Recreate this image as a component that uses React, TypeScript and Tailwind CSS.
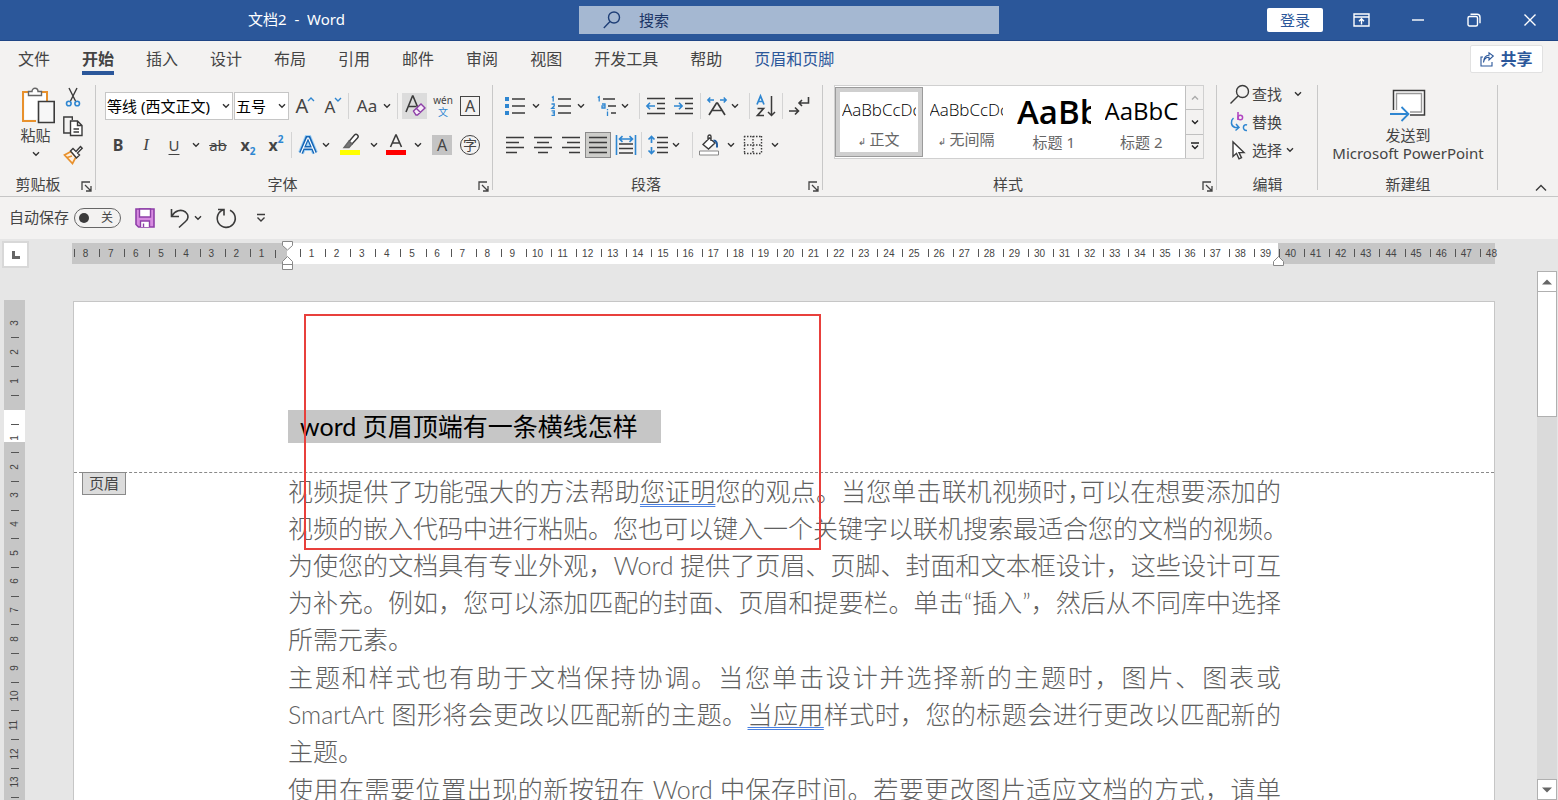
import type { ReactNode } from 'react';
import clsx from 'clsx';

const TABS = ['文件', '开始', '插入', '设计', '布局', '引用', '邮件', '审阅', '视图', '开发工具', '帮助'];

const LEFT_MARKS = [8, 7, 6, 5, 4, 3, 2, 1];
const BODY_MARKS = Array.from({ length: 39 }, (_, i) => i + 1);
const RIGHT_MARKS = Array.from({ length: 9 }, (_, i) => i + 40);
const SIDE_MARKS = Array.from({ length: 13 }, (_, i) => i + 1);

const STYLES = [
  { name: '正文', mark: true, sample: 'AaBbCcDc', look: 'text-[17px] font-light' },
  { name: '无间隔', mark: true, sample: 'AaBbCcDc', look: 'text-[17px] font-light' },
  { name: '标题 1', mark: false, sample: 'AaBb', look: 'text-[33px] font-semibold' },
  { name: '标题 2', mark: false, sample: 'AaBbC', look: 'text-2xl' },
];

function Chevron({ className = 'w-4' }: { className?: string }) {
  return (
    <button aria-label="更多选项" className={clsx('flex h-6 shrink-0 items-center justify-center', className)}>
      <svg width="8" height="6" viewBox="0 0 8 6" fill="none" stroke="#333" strokeWidth="1.4"><path d="M1 1.2 4 4.2 7 1.2" /></svg>
    </button>
  );
}

function Tool({ label, className = 'w-5', children }: { label: string; className?: string; children: ReactNode }) {
  return (
    <button aria-label={label} className={clsx('flex h-[26px] shrink-0 items-center justify-center', className)}>
      {children}
    </button>
  );
}

function Sep({ className }: { className?: string }) {
  return <span className={clsx('h-[26px] w-px shrink-0 bg-[#d4d4d4]', className)} />;
}

function Icon({ children, w = 20, h = 20 }: { children: ReactNode; w?: number; h?: number }) {
  return (
    <svg width={w} height={h} viewBox={`0 0 ${w} ${h}`} fill="none" stroke="#3b3b3b" strokeWidth="1.4" className="shrink-0 overflow-visible">
      {children}
    </svg>
  );
}

function Launcher() {
  return (
    <button aria-label="对话框启动器" className="absolute right-0.5 bottom-0.5 flex size-4 items-center justify-center">
      <svg width="11" height="11" viewBox="0 0 11 11" fill="none" stroke="#444" strokeWidth="1.3"><path d="M1 9V1h8M4 4l5.5 5.5M10 5v5H5" /></svg>
    </button>
  );
}

function Group({ title, className, launcher, children }: { title: string; className?: string; launcher?: boolean; children: ReactNode }) {
  return (
    <section className={clsx('relative flex h-[113px] flex-col justify-between', className)}>
      <span className="absolute top-0.5 right-0 h-[105px] w-px bg-[#c8c8c8]" />
      <div>{children}</div>
      <h2 className="text-center leading-6">{title}</h2>
      {launcher && <Launcher />}
    </section>
  );
}

function TitleBar() {
  return (
    <header className="grid h-[41px] shrink-0 grid-cols-[579fr_420fr_559fr] items-center border-b border-[#1f4585] bg-[#2b579a] text-white">
      <h1 className="pb-0.5 pl-[14px] text-center whitespace-pre">文档2  -  Word</h1>
      <label className="flex h-7 items-center bg-[#a5b8d2] pl-6">
        <Icon w={18} h={18}><circle cx="11" cy="6.5" r="5.5" stroke="#1f3f77" /><path stroke="#1f3f77" d="M7 10.5 .8 17" /></Icon>
        <input type="search" aria-label="搜索" placeholder="搜索" className="ml-[18px] min-w-0 flex-1 bg-transparent outline-none placeholder:text-[#1b3566] placeholder:opacity-100" />
      </label>
      <div className="flex items-center justify-end pr-[21px]">
        <button className="h-6 w-14 rounded-xs bg-white text-[#2b579a]">登录</button>
        <button aria-label="功能区显示选项" className="ml-[30px]">
          <Icon w={18} h={14}><g stroke="#fff"><path d="M1 1h15v12H1zM1 4h15M8.5 11.5V6M6 8.3 8.5 5.8 11 8.3" /></g></Icon>
        </button>
        <button aria-label="最小化" className="ml-10">
          <Icon w={14} h={14}><path stroke="#fff" d="M1 7h12" /></Icon>
        </button>
        <button aria-label="还原" className="ml-[42px]">
          <Icon w={14} h={14}><g stroke="#fff"><rect x="1" y="3.5" width="9.5" height="9.5" rx="1.5" /><path d="M3.5 1.2H10a3 3 0 0 1 3 3v6" /></g></Icon>
        </button>
        <button aria-label="关闭" className="ml-[42px]">
          <Icon w={14} h={14}><path stroke="#fff" d="M1.5 1.5l11 11M12.5 1.5l-11 11" /></Icon>
        </button>
      </div>
    </header>
  );
}

function TabBar() {
  return (
    <nav className="flex h-[42px] shrink-0 items-start pr-[15px] pl-[18px] text-base">
      <div className="flex flex-1 gap-8">
        {TABS.map(tab => (
          <button key={tab} className={clsx('relative h-[34px] pt-0.5', tab === '开始' && 'font-bold')}>
            {tab}
            {tab === '开始' && <span className="absolute inset-x-0 bottom-0 h-1 bg-[#2b579a]" />}
          </button>
        ))}
        <button className="pt-0.5 text-[#2b579a]">页眉和页脚</button>
      </div>
      <button className="mt-1 flex h-7 w-[73px] items-center justify-center gap-1.5 rounded-xs border border-[#e1e1e1] bg-white font-bold text-[#2b579a]">
        <Icon w={14} h={15}><g stroke="#2b579a" strokeWidth="1.1"><path d="M3 5H1v9h11v-4M3.5 10.5C4 7 6 5.300 9 5.300V8l4.300-4L9 .8v2.500C5.500 3.500 3.700 6.500 3.500 10.500Z" /></g></Icon>
        共享
      </button>
    </nav>
  );
}

function ClipboardGroup() {
  return (
    <Group title="剪贴板" launcher className="w-24 shrink-0 [&>h2]:pr-5">
      <div className="flex pl-[18px]">
        <button className="flex w-[35px] flex-col items-center pt-1 leading-5 whitespace-nowrap">
          <Icon w={34} h={37}>
            <path stroke="#e8912d" strokeWidth="2" d="M10 5H4v29h13M22 5h6v9" />
            <path fill="#fff" stroke="none" d="M5.500 6.500H27V14H19v18.500H5.500z" />
            <path stroke="#666" fill="#fff" d="M9.500 8.500v-4h3.500a3 3.300 0 0 1 6 0h3.500v4z" />
            <path fill="#f7f7f7" strokeWidth="1.6" d="M19.500 14.500h15.700v21H19.500z" />
          </Icon>
          <span className="mt-px">粘贴</span>
          <svg width="8" height="6" viewBox="0 0 8 6" fill="none" stroke="#333" strokeWidth="1.4" className="mt-1.5"><path d="M1 1.200 4 4.200 7 1.200" /></svg>
        </button>
        <div className="ml-2.5 flex flex-col items-center gap-[9px] pt-1">
          <button aria-label="剪切">
            <Icon>
              <path d="M6 1l6.500 13M14 1 7.500 14" />
              <g stroke="#2e86d1" strokeWidth="1.600"><circle cx="5.800" cy="16.500" r="2.300" /><circle cx="14.200" cy="16.500" r="2.300" /></g>
            </Icon>
          </button>
          <button aria-label="复制">
            <Icon><path d="M7 17H.8V1h8.500v3" /><path fill="#fff" d="M7.500 5h7l4.500 4.500V19.500H7.500zM14.500 5v4.500H19M10.500 13h5.500M10.500 16h5.500" /></Icon>
          </button>
          <button aria-label="格式刷">
            <Icon>
              <path stroke="#e8912d" fill="#fdf0e0" strokeWidth="1.700" d="M8 6.500 1.500 10l8 8.500L13 12z" />
              <path stroke="#e8912d" d="M4 12.500l5-1.500" />
              <path fill="#fff" d="M7.500 6l2.500-2.500 3 3L17.500 1.500l1.700 1.700L14.500 8l2 2-3 3z" />
            </Icon>
          </button>
        </div>
      </div>
    </Group>
  );
}

function FontGroup() {
  return (
    <Group title="字体" launcher className="w-[397px] shrink-0 [&>h2]:pr-6">
      <div className="flex h-[46px] items-center pl-[9px]">
        <div className="relative w-32">
          <select aria-label="字体" className="h-7 w-full appearance-none border border-[#c6c6c6] bg-white pl-px text-black">
            <option>等线 (西文正文)</option>
          </select>
          <span className="pointer-events-none absolute top-0.5 right-0"><Chevron className="w-3.5" /></span>
        </div>
        <div className="relative ml-px w-[55px]">
          <select aria-label="字号" className="h-7 w-full appearance-none border border-[#c6c6c6] bg-white pl-px text-black">
            <option>五号</option>
          </select>
          <span className="pointer-events-none absolute top-0.5 right-0"><Chevron className="w-3.5" /></span>
        </div>
        <Tool label="增大字号" className="w-8"><span className="text-xl leading-none">A</span><Icon w={6} h={20}><path stroke="#2e86d1" d="M0 5l3-3 3 3" /></Icon></Tool>
        <Tool label="减小字号" className="w-6"><span className="text-[17px] leading-none">A</span><Icon w={6} h={20}><path stroke="#2e86d1" d="M0 2l3 3 3-3" /></Icon></Tool>
        <Sep className="ml-[3px]" />
        <Tool label="更改大小写" className="w-8 pl-1"><span className="text-[17px]">Aa</span></Tool>
        <Chevron className="w-3" />
        <Sep className="ml-1" />
        <Tool label="清除所有格式" className="ml-1 w-[25px] bg-[#dcdcdc]">
          <Icon w={22} h={24}>
            <path strokeWidth="1.600" d="M2 18 8.500 2h.5l5 12M4.200 12.500h8" />
            <path stroke="#8e3fa8" fill="#f6eaf8" d="M9.500 17l7.500-7 4 4-7.500 7h-1.500zM12.500 14.500l4 4" />
          </Icon>
        </Tool>
        <Tool label="拼音指南" className="w-8 flex-col text-[10px] leading-3"><span>wén</span><span className="text-[#2e86d1]">文</span></Tool>
        <Tool label="字符边框" className="w-[22px]"><span className="flex size-5 items-center justify-center border-[1.5px] border-[#444] text-base leading-none">A</span></Tool>
      </div>
      <div className="flex h-8 items-center pl-2">
        <Tool label="加粗" className="w-7"><span className="text-base font-bold">B</span></Tool>
        <Tool label="倾斜" className="w-7"><span className="font-[Liberation_Serif] text-[17px] italic">I</span></Tool>
        <Tool label="下划线" className="w-7"><span className="underline underline-offset-3">U</span></Tool>
        <Chevron />
        <Tool label="删除线" className="w-7"><span className="line-through">ab</span></Tool>
        <Tool label="下标" className="w-8"><span className="text-base font-bold">x</span><span className="mt-3 text-[10px] font-bold text-[#2e86d1]">2</span></Tool>
        <Tool label="上标" className="w-6"><span className="text-base font-bold">x</span><span className="mb-3 text-[10px] font-bold text-[#2e86d1]">2</span></Tool>
        <Sep className="mr-1 ml-[3px]" />
        <Tool label="文本效果" className="w-6">
          <Icon><path stroke="#9fd0f5" strokeWidth="6" d="M3 18 9.200 3h1.600L17 18M5.500 13h9" /><path stroke="#1565b5" strokeWidth="4" d="M3 18 9.200 3h1.600L17 18M5.500 13h9" /><path stroke="#fff" strokeWidth="1.200" d="M3 18 9.500 3h1L17 18M5.500 13h9" /></Icon>
        </Tool>
        <Chevron className="w-3" />
        <Tool label="突出显示" className="w-9">
          <Icon w={20} h={22}><path fill="#ff0" stroke="none" d="M0 16h20v5H0z" /><path fill="#fff" d="M9 7.500 14.500 1a2 2 0 0 1 3 3L12 10z" /><path fill="#777" stroke="#666" d="M9 7 12 10l-3 3.500H4z" /></Icon>
        </Tool>
        <Chevron className="w-3" />
        <Tool label="字体颜色" className="w-8">
          <Icon w={20} h={22}><path fill="#f00" stroke="none" d="M0 16h20v5H0z" /><path strokeWidth="1.600" d="M4.500 13 9.800 1h.4L15.500 13M6.500 9h7" /></Icon>
        </Tool>
        <Chevron className="w-3" />
        <Tool label="字符底纹" className="w-9"><span className="flex size-5 items-center justify-center bg-[#c4c4c4] text-base leading-none">A</span></Tool>
        <Tool label="带圈字符"><span className="flex size-5 items-center justify-center rounded-full border border-[#444] text-sm leading-none">字</span></Tool>
      </div>
    </Group>
  );
}

function ParagraphGroup() {
  return (
    <Group title="段落" launcher className="w-[330px] shrink-0 [&>h2]:pr-6">
      <div className="flex h-[46px] items-center pl-3">
        <Tool label="项目符号">
          <Icon><path d="M7 3h13M7 10h13M7 17h13" /><path fill="#2e86d1" stroke="none" d="M0 1h4v4H0zM0 8h4v4H0zM0 15h4v4H0z" /></Icon>
        </Tool>
        <Chevron className="w-[22px]" />
        <Tool label="编号" className="ml-1 w-5">
          <Icon><path d="M7 3h13M7 10h13M7 17h13" /><path stroke="#2e86d1" strokeWidth="1.300" d="M.8 1.500 2.200.6V5.500M.5 8h2.700v2L.8 12.300h3M.5 14.800h2.800v2H1.500h1.800v2.500H.5" /></Icon>
        </Tool>
        <Chevron className="w-5" />
        <Tool label="多级列表" className="ml-1.5 w-5">
          <Icon><path d="M6 3h12M11 10h8M14 17h5" /><path stroke="#2e86d1" strokeWidth="1.300" d="M.8 1.500 2.200.6V5.500M5 8h3v4H5V9.800h3M10.500 15.500v4.500M10.500 13v1.300" /></Icon>
        </Tool>
        <Chevron />
        <Sep className="ml-1.5" />
        <Tool label="减少缩进量" className="ml-1.5 w-5">
          <Icon><path d="M1 2.500h18M11 7.500h8M11 12.500h8M1 17.500h18" /><path stroke="#2e86d1" strokeWidth="1.600" d="M9 10H1M4 6.800.9 10 4 13.200" /></Icon>
        </Tool>
        <Tool label="增加缩进量" className="ml-2 w-5">
          <Icon><path d="M1 2.500h18M11 7.500h8M11 12.500h8M1 17.500h18" /><path stroke="#2e86d1" strokeWidth="1.600" d="M0 10h8M5 6.800 8.100 10 5 13.200" /></Icon>
        </Tool>
        <Sep className="ml-1.5" />
        <Tool label="中文版式" className="ml-1.5 w-5">
          <Icon><path strokeWidth="1.700" d="M2 19 9.500 7h1L18 19M5.500 14.500h9" /><path stroke="#2e86d1" d="M7 4H.8M3.300 1.500.8 4l2.500 2.500M13 4h6.200M16.700 1.500 19.200 4l-2.500 2.500" /></Icon>
        </Tool>
        <Chevron />
        <Sep className="ml-1.5" />
        <Tool label="排序" className="ml-1.5 w-5">
          <Icon w={20} h={22}><path stroke="#2e86d1" strokeWidth="1.700" d="M1 9.500 4.500 1 8 9.500M2.300 6.500h4.500" /><path strokeWidth="1.700" d="M1.500 13.500h6L1.500 20.500h6.500" /><path strokeWidth="1.500" d="M15.500 1v19.500M12 17l3.500 3.500L19 17" /></Icon>
        </Tool>
        <Sep className="ml-1.5" />
        <Tool label="显示编辑标记" className="ml-1.5 w-5">
          <Icon><path strokeWidth="1.600" d="M19.500 1v6H10M13 4 10 7l3 3M0 15h9.500M6 11.500 9.500 15 6 18.500" /></Icon>
        </Tool>
      </div>
      <div className="flex h-8 items-center pl-3">
        <Tool label="左对齐"><Icon><path d="M1 2.500h18M1 7.500h13M1 12.500h18M1 17.500h11" /></Icon></Tool>
        <Tool label="居中" className="ml-2 w-5"><Icon><path d="M1 2.500h18M4 7.500h12M1 12.500h18M5 17.500h10" /></Icon></Tool>
        <Tool label="右对齐" className="ml-2 w-5"><Icon><path d="M1 2.500h18M6 7.500h13M1 12.500h18M8 17.500h11" /></Icon></Tool>
        <Tool label="两端对齐" className="ml-1 w-[26px] border border-[#8a8a8a] bg-[#cdcdca]"><Icon><path d="M1 2.500h18M1 7.500h18M1 12.500h18M1 17.500h18" /></Icon></Tool>
        <Tool label="分散对齐" className="ml-1 w-[22px]">
          <Icon><path d="M3 9h14M3 13.500h14M3 18h14" /><path stroke="#2e86d1" strokeWidth="1.600" d="M.5 0v20M19.500 0v20M3.500 4h13M6.500 1.200 3.500 4l3 2.800M13.500 1.200l3 2.800-3 2.800" /></Icon>
        </Tool>
        <Sep className="ml-1" />
        <Tool label="行距" className="ml-1.5 w-5">
          <Icon><path d="M9 2.500h11M9 7.500h11M9 12.500h11M9 17.500h11" /><path stroke="#2e86d1" strokeWidth="1.700" d="M3.500 8V1.500M.5 4.500l3-3 3 3M3.500 12v6.500M.5 15.500l3 3 3-3" /></Icon>
        </Tool>
        <Chevron />
        <Sep className="ml-2" />
        <Tool label="底纹" className="ml-1.5 w-5">
          <Icon><path fill="#fff" stroke="#888" strokeWidth="1" d="M.5 16h19v4H.5z" /><path fill="#fff" d="M4 9.500 10.500 3l5.500 5-6.500 6zM9 5V1.500a1.500 1.500 0 0 1 3 0V6" /><path stroke="#1f5a9e" strokeWidth="2" d="M14.500 5.500c3 0 4 2.500 3.500 7" /></Icon>
        </Tool>
        <Chevron className="w-6" />
        <Tool label="边框"><Icon><path strokeDasharray="1.500 1.500" d="M1 1.500h18M1 10h18M1 18.500h18M1.500 1v18M10 1v18M18.500 1v18" /></Icon></Tool>
        <Chevron className="w-6" />
      </div>
    </Group>
  );
}

function StylesGroup() {
  return (
    <Group title="样式" launcher className="min-w-0 flex-1 [&>h2]:pr-6">
      <div className="mt-0.5 mr-[13px] ml-[11px] flex h-[74px] border border-[#d0d0d0] bg-white">
        {STYLES.map((style, i) => (
          <button
            key={style.name}
            className={clsx('my-px flex min-w-0 flex-1 flex-col justify-between overflow-hidden border px-0.5 pt-0.5 pb-1',
              i === 0 ? 'border-[#9b9b9b] ring-4 ring-[#cfcfcf] ring-inset' : 'border-transparent')}
          >
            <span className="mx-1 flex h-[46px] items-center overflow-hidden">
              <span className={clsx('font-[Open_Sans] leading-none text-black', style.look)}>{style.sample}</span>
            </span>
            <span className="w-full text-center leading-5 text-[#666]">
              {style.mark && <span className="font-[DejaVu_Sans] text-[10px]">↲ </span>}{style.name}
            </span>
          </button>
        ))}
        <div className="flex w-[18px] shrink-0 flex-col divide-y divide-[#c0c0c0] border-l border-[#c0c0c0] bg-[#f3f2f1]">
          <button aria-label="上一行" className="flex flex-1 items-center justify-center"><Icon w={8} h={6}><path stroke="#aaa" d="M1 4.500l3-3 3 3" /></Icon></button>
          <button aria-label="下一行" className="flex flex-1 items-center justify-center"><Icon w={8} h={6}><path stroke="#222" d="M1 1.500l3 3 3-3" /></Icon></button>
          <button aria-label="其他" className="flex flex-1 items-center justify-center"><Icon w={8} h={8}><path stroke="#222" d="M0 1h8M1 3.500l3 3 3-3" /></Icon></button>
        </div>
      </div>
    </Group>
  );
}

function EditGroup() {
  return (
    <Group title="编辑" className="w-[101px] shrink-0">
      <div className="flex flex-col pl-[13px] leading-7">
        <div className="-mt-[3px] flex items-center">
          <button className="flex items-center gap-[3px]"><Icon w={19} h={19}><circle cx="12.500" cy="6.500" r="6" /><path d="M8 11 .5 18.500" /></Icon>查找</button>
          <Chevron className="ml-1.5 w-5" />
        </div>
        <button className="flex items-center gap-[3px]">
          <Icon w={19} h={20}>
            <path stroke="#b146c2" strokeWidth="1.600" d="M8 0v8" /><circle cx="10.300" cy="5.500" r="2.300" stroke="#b146c2" strokeWidth="1.500" />
            <path stroke="#2e86d1" strokeWidth="1.500" d="M3.500 6c-3 2.500-3 8 1.500 9.500h3.500M6 12l3 3.500-3.500 3M17 13c-4-2-5.500 6 0 5.500" />
          </Icon>
          替换
        </button>
        <div className="flex items-center">
          <button className="flex items-center gap-[3px]"><Icon w={19} h={19}><path fill="#fff" d="M3 1v14.500l3.500-3.200 2.500 5.500 2.500-1.200-2.500-5h5z" /></Icon>选择</button>
          <Chevron />
        </div>
      </div>
    </Group>
  );
}

function Ribbon() {
  return (
    <div className="flex shrink-0 border-b border-[#c6c6c6]">
      <ClipboardGroup />
      <FontGroup />
      <ParagraphGroup />
      <StylesGroup />
      <EditGroup />
      <Group title="新建组" className="w-[180px] shrink-0">
        <button className="flex w-full flex-col items-center pt-[7px] leading-[18px]">
          <Icon w={36} h={32}>
            <path fill="#fff" strokeWidth="1.500" d="M3.500 20V.500h31V25H20" />
            <path stroke="#999" d="M6.500 20V3.500h25V22H20" />
            <path stroke="#2e86d1" strokeWidth="1.800" d="M0 24h18M11.500 17 18.500 24l-7 7" />
          </Icon>
          <span className="mt-1">发送到</span>
          <span>Microsoft PowerPoint</span>
        </button>
      </Group>
      <div className="flex w-[60px] shrink-0 items-end justify-center pb-1 pl-[26px]">
        <button aria-label="折叠功能区"><Icon w={12} h={8}><path d="M1 6.500l5-5 5 5" /></Icon></button>
      </div>
    </div>
  );
}

function QuickAccess() {
  return (
    <div className="flex h-[42px] shrink-0 items-center pb-px pl-[9px]">
      <label htmlFor="autosave" className="pb-px">自动保存</label>
      <span className="relative ml-[5px] flex h-5 w-[47px] items-center rounded-full border border-[#666] px-1">
        <input id="autosave" type="checkbox" className="size-2.5 appearance-none rounded-full bg-[#3b3b3b]" />
        <span className="ml-3 text-xs">关</span>
      </span>
      <button aria-label="保存" className="ml-3.5">
        <Icon w={20} h={20}><path fill="#d78be0" stroke="#8e3fa8" strokeWidth="1.600" d="M1 1h18v18H3.500L1 16.500z" /><path fill="#fff" stroke="#8e3fa8" d="M4.500 1h11v8h-11zM5.500 19v-6h9v6M8.500 19v-3.500" /></Icon>
      </button>
      <button aria-label="撤消" className="ml-[15px]">
        <Icon w={20} h={20}><path strokeWidth="1.600" d="M1.500 1v7.500H9M1.800 8.200C5 2.500 11 .8 15.500 4c4 3.500 2.500 7.500 0 9.500L9 19.500" /></Icon>
      </button>
      <Chevron />
      <button aria-label="恢复" className="ml-2.5">
        <Icon w={20} h={20}><path strokeWidth="1.600" d="M2 1.500h6v6M14 2.200A9 9 0 1 1 7.500 1.800" /></Icon>
      </button>
      <button aria-label="自定义快速访问工具栏" className="ml-5">
        <Icon w={10} h={10}><path d="M1 1.500h8M1.500 4.500 5 8l3.500-3.500" /></Icon>
      </button>
    </div>
  );
}

function Mark({ value }: { value: number }) {
  return (
    <span className="relative flex h-5 items-center justify-center">
      <span className="absolute left-px h-2 w-px bg-[#555]" />
      {value}
    </span>
  );
}

function HorizontalRuler() {
  return (
    <div className="relative flex h-[21px] text-[10px] text-[#444]">
      <div className="flex w-[215px] shrink-0 bg-[#c6c6c6] pl-px">
        <div className="grid flex-1 grid-cols-8">{LEFT_MARKS.map(n => <Mark key={n} value={n} />)}</div>
        <div className="flex w-[13px] items-center pl-px"><span className="h-2 w-px bg-[#555]" /></div>
      </div>
      <div className="flex min-w-0 flex-1 bg-white pl-3">
        <div className="grid flex-1 grid-cols-[repeat(39,minmax(0,1fr))]">{BODY_MARKS.map(n => <Mark key={n} value={n} />)}</div>
      </div>
      <div className="w-[217px] shrink-0 bg-[#c6c6c6]">
        <div className="grid w-[226px] grid-cols-9">{RIGHT_MARKS.map(n => <Mark key={n} value={n} />)}</div>
      </div>
      {/* indent markers sit over the ruler edges */}
      <svg width="12" height="30" viewBox="0 0 12 30" fill="#fff" stroke="#888" className="absolute -top-0.5 left-[210px]">
        <path d="M.5.5h10v4l-5 4.500-5-4.500zM.5 28.500v-8l5-5 5 5v8zM.5 23.500h10" />
      </svg>
      <svg width="12" height="12" viewBox="0 0 12 12" fill="#fff" stroke="#888" className="absolute top-[13px] right-[210px]">
        <path d="M.5 9.500v-4l5-5 5 5v4z" />
      </svg>
    </div>
  );
}

function SideMark({ value }: { value: number }) {
  return <span className="flex h-3.5 items-center justify-center"><span className="-rotate-90">{value}</span></span>;
}

function SideTick() {
  return <span className="flex h-3.5 items-center justify-center"><span className="h-px w-2 bg-[#555]" /></span>;
}

function VerticalRuler() {
  return (
    <div className="flex w-[21px] flex-1 flex-col overflow-hidden text-[10px] leading-none text-[#444]">
      <div className="h-[110px] shrink-0 bg-[#c6c6c6] pt-4">
        {[3, 2, 1].map(n => (
          <div key={n} className="flex h-[29px] flex-col"><SideMark value={n} /><SideTick /></div>
        ))}
      </div>
      <div className="flex-1 bg-[linear-gradient(#fff_32px,#c6c6c6_32px)] pt-[7px]">
        <div className="grid h-[373px] grid-rows-[repeat(13,minmax(0,1fr))]">
          {SIDE_MARKS.map(n => (
            <div key={n}><SideTick /><SideMark value={n} /></div>
          ))}
        </div>
        <SideTick />
      </div>
    </div>
  );
}

function Line({ children, last }: { children: ReactNode; last?: boolean }) {
  return <span className={clsx('block whitespace-nowrap', !last && '[text-align-last:justify]')}>{children}</span>;
}

function Flagged({ children }: { children: ReactNode }) {
  return <span className="underline decoration-[#4a80e0] decoration-double decoration-1 underline-offset-3">{children}</span>;
}

function Page() {
  return (
    <article className="relative min-w-0 flex-1 border border-b-0 border-[#c6c6c6] bg-white font-[Lato,'Noto_Sans_CJK_SC',sans-serif] text-[25px] leading-[37px] font-light">
      <div className="h-[171px] border-b border-dashed border-[#8a8a8a] pt-[108px] pl-[214px]">
        <p className="h-[33px] w-[373px] bg-[#c6c6c6] pl-3 leading-8 font-normal whitespace-nowrap text-black">word 页眉顶端有一条横线怎样</p>
      </div>
      <span className="absolute top-[170px] left-2 flex h-[23px] w-11 items-center justify-center border border-[#8a8a8a] bg-[#dcdcdc] text-[15px] font-normal text-[#444]">页眉</span>
      <div className="mr-[213px] ml-[214px] space-y-px text-[#606060]">
        <p>
          <Line>视频提供了功能强大的方法帮助<Flagged>您证明</Flagged>您的观点。当您单击联机视频时<span className="[font-feature-settings:'halt']">，</span>可以在想要添加的</Line>
          <Line>视频的嵌入代码中进行粘贴。您也可以键入一个关键字以联机搜索最适合您的文档的视频。</Line>
          <Line>为使您的文档具有专业外观，Word 提供了页眉、页脚、封面和文本框设计，这些设计可互</Line>
          <Line>为补充。例如，您可以添加匹配的封面、页眉和提要栏。单击“插入”，然后从不同库中选择</Line>
          <Line last>所需元素。</Line>
        </p>
        <p>
          <Line>主题和样式也有助于文档保持协调。当您单击设计并选择新的主题时，图片、图表或</Line>
          <Line>SmartArt 图形将会更改以匹配新的主题。<Flagged>当应用</Flagged>样式时，您的标题会进行更改以匹配新的</Line>
          <Line last>主题。</Line>
        </p>
        <p>
          <Line>使用在需要位置出现的新按钮在 Word 中保存时间。若要更改图片适应文档的方式，请单</Line>
        </p>
      </div>
      {/* callout frame drawn over the header area */}
      <span className="pointer-events-none absolute top-3 left-[230px] h-[236px] w-[517px] border-2 border-[#e8403c]" />
    </article>
  );
}

function ScrollBar() {
  return (
    <div className="mt-8 flex w-5 flex-col bg-[#dadada]">
      <button aria-label="向上滚动" className="flex h-[21px] items-center justify-center border border-[#b0b0b0] bg-white">
        <svg width="10" height="6" viewBox="0 0 10 6" fill="#666"><path d="M0 5.500 5 .5l5 5z" /></svg>
      </button>
      <div className="h-[125px] border border-t-0 border-[#b0b0b0] bg-white" />
      <div className="flex-1" />
      <button aria-label="向下滚动" className="flex h-[21px] items-center justify-center border border-[#b0b0b0] bg-white">
        <svg width="10" height="6" viewBox="0 0 10 6" fill="#666"><path d="M0 .5 5 5.500l5-5z" /></svg>
      </button>
    </div>
  );
}

export default function App() {
  return (
    <div lang="zh-CN" className="flex h-screen flex-col overflow-hidden bg-[#f3f2f1] font-['Noto_Sans','Noto_Sans_CJK_SC',sans-serif] text-[15px] text-[#444]">
      <TitleBar />
      <TabBar />
      <Ribbon />
      <QuickAccess />
      <main className="flex min-h-0 flex-1 bg-[#e6e6e6]">
        <div className="flex w-[72px] shrink-0 flex-col pt-0.5 pl-1 font-[Liberation_Sans]">
          <button aria-label="制表符" className="mb-[32px] -ml-0.5 flex size-[27px] shrink-0 items-center justify-center border-2 border-[#d8d8d8] bg-white">
            <svg width="8" height="8" viewBox="0 0 8 8" fill="none" stroke="#666" strokeWidth="3"><path d="M1.500 0v6.500H8" /></svg>
          </button>
          <VerticalRuler />
        </div>
        <div className="flex min-w-0 flex-1 flex-col pt-1">
          <div className="mb-[37px] font-[Liberation_Sans]"><HorizontalRuler /></div>
          <div className="ml-px flex min-h-0 flex-1 overflow-hidden"><Page /></div>
        </div>
        <div className="flex shrink-0 pr-px pl-[42px]"><ScrollBar /></div>
      </main>
    </div>
  );
}
